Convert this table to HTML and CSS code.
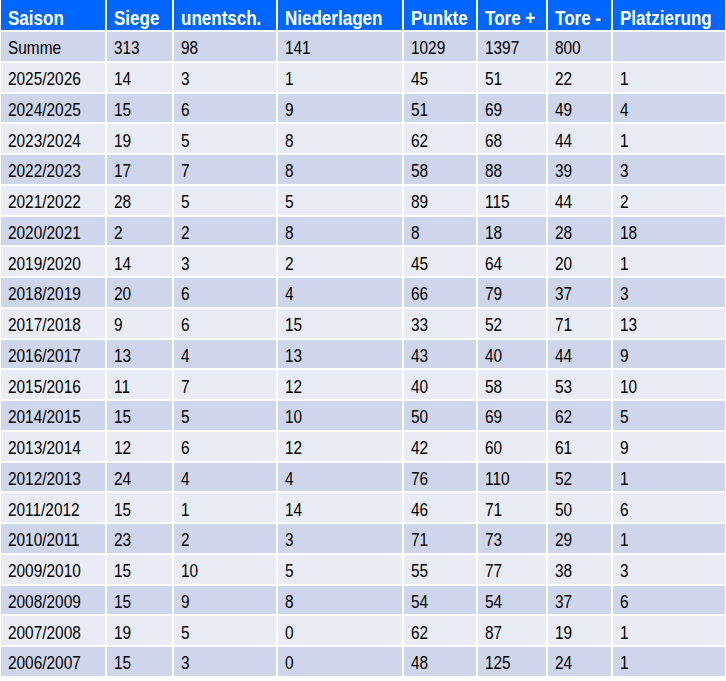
FILE: index.html
```html
<!DOCTYPE html>
<html lang="de">
<head>
<meta charset="utf-8">
<link rel="stylesheet" href="styles.css">
</head>
<body>
<div class="table">
  <div class="th"><span>Saison</span></div><div class="th"><span>Siege</span></div><div class="th"><span>unentsch.</span></div><div class="th"><span>Niederlagen</span></div><div class="th"><span>Punkte</span></div><div class="th"><span>Tore +</span></div><div class="th"><span>Tore -</span></div><div class="th"><span>Platzierung</span></div>
  <div class="td o"><span>Summe</span></div><div class="td o"><span>313</span></div><div class="td o"><span>98</span></div><div class="td o"><span>141</span></div><div class="td o"><span>1029</span></div><div class="td o"><span>1397</span></div><div class="td o"><span>800</span></div><div class="td o"><span></span></div>
  <div class="td e"><span>2025/2026</span></div><div class="td e"><span>14</span></div><div class="td e"><span>3</span></div><div class="td e"><span>1</span></div><div class="td e"><span>45</span></div><div class="td e"><span>51</span></div><div class="td e"><span>22</span></div><div class="td e"><span>1</span></div>
  <div class="td o"><span>2024/2025</span></div><div class="td o"><span>15</span></div><div class="td o"><span>6</span></div><div class="td o"><span>9</span></div><div class="td o"><span>51</span></div><div class="td o"><span>69</span></div><div class="td o"><span>49</span></div><div class="td o"><span>4</span></div>
  <div class="td e"><span>2023/2024</span></div><div class="td e"><span>19</span></div><div class="td e"><span>5</span></div><div class="td e"><span>8</span></div><div class="td e"><span>62</span></div><div class="td e"><span>68</span></div><div class="td e"><span>44</span></div><div class="td e"><span>1</span></div>
  <div class="td o"><span>2022/2023</span></div><div class="td o"><span>17</span></div><div class="td o"><span>7</span></div><div class="td o"><span>8</span></div><div class="td o"><span>58</span></div><div class="td o"><span>88</span></div><div class="td o"><span>39</span></div><div class="td o"><span>3</span></div>
  <div class="td e"><span>2021/2022</span></div><div class="td e"><span>28</span></div><div class="td e"><span>5</span></div><div class="td e"><span>5</span></div><div class="td e"><span>89</span></div><div class="td e"><span>115</span></div><div class="td e"><span>44</span></div><div class="td e"><span>2</span></div>
  <div class="td o"><span>2020/2021</span></div><div class="td o"><span>2</span></div><div class="td o"><span>2</span></div><div class="td o"><span>8</span></div><div class="td o"><span>8</span></div><div class="td o"><span>18</span></div><div class="td o"><span>28</span></div><div class="td o"><span>18</span></div>
  <div class="td e"><span>2019/2020</span></div><div class="td e"><span>14</span></div><div class="td e"><span>3</span></div><div class="td e"><span>2</span></div><div class="td e"><span>45</span></div><div class="td e"><span>64</span></div><div class="td e"><span>20</span></div><div class="td e"><span>1</span></div>
  <div class="td o"><span>2018/2019</span></div><div class="td o"><span>20</span></div><div class="td o"><span>6</span></div><div class="td o"><span>4</span></div><div class="td o"><span>66</span></div><div class="td o"><span>79</span></div><div class="td o"><span>37</span></div><div class="td o"><span>3</span></div>
  <div class="td e"><span>2017/2018</span></div><div class="td e"><span>9</span></div><div class="td e"><span>6</span></div><div class="td e"><span>15</span></div><div class="td e"><span>33</span></div><div class="td e"><span>52</span></div><div class="td e"><span>71</span></div><div class="td e"><span>13</span></div>
  <div class="td o"><span>2016/2017</span></div><div class="td o"><span>13</span></div><div class="td o"><span>4</span></div><div class="td o"><span>13</span></div><div class="td o"><span>43</span></div><div class="td o"><span>40</span></div><div class="td o"><span>44</span></div><div class="td o"><span>9</span></div>
  <div class="td e"><span>2015/2016</span></div><div class="td e"><span>11</span></div><div class="td e"><span>7</span></div><div class="td e"><span>12</span></div><div class="td e"><span>40</span></div><div class="td e"><span>58</span></div><div class="td e"><span>53</span></div><div class="td e"><span>10</span></div>
  <div class="td o"><span>2014/2015</span></div><div class="td o"><span>15</span></div><div class="td o"><span>5</span></div><div class="td o"><span>10</span></div><div class="td o"><span>50</span></div><div class="td o"><span>69</span></div><div class="td o"><span>62</span></div><div class="td o"><span>5</span></div>
  <div class="td e"><span>2013/2014</span></div><div class="td e"><span>12</span></div><div class="td e"><span>6</span></div><div class="td e"><span>12</span></div><div class="td e"><span>42</span></div><div class="td e"><span>60</span></div><div class="td e"><span>61</span></div><div class="td e"><span>9</span></div>
  <div class="td o"><span>2012/2013</span></div><div class="td o"><span>24</span></div><div class="td o"><span>4</span></div><div class="td o"><span>4</span></div><div class="td o"><span>76</span></div><div class="td o"><span>110</span></div><div class="td o"><span>52</span></div><div class="td o"><span>1</span></div>
  <div class="td e"><span>2011/2012</span></div><div class="td e"><span>15</span></div><div class="td e"><span>1</span></div><div class="td e"><span>14</span></div><div class="td e"><span>46</span></div><div class="td e"><span>71</span></div><div class="td e"><span>50</span></div><div class="td e"><span>6</span></div>
  <div class="td o"><span>2010/2011</span></div><div class="td o"><span>23</span></div><div class="td o"><span>2</span></div><div class="td o"><span>3</span></div><div class="td o"><span>71</span></div><div class="td o"><span>73</span></div><div class="td o"><span>29</span></div><div class="td o"><span>1</span></div>
  <div class="td e"><span>2009/2010</span></div><div class="td e"><span>15</span></div><div class="td e"><span>10</span></div><div class="td e"><span>5</span></div><div class="td e"><span>55</span></div><div class="td e"><span>77</span></div><div class="td e"><span>38</span></div><div class="td e"><span>3</span></div>
  <div class="td o"><span>2008/2009</span></div><div class="td o"><span>15</span></div><div class="td o"><span>9</span></div><div class="td o"><span>8</span></div><div class="td o"><span>54</span></div><div class="td o"><span>54</span></div><div class="td o"><span>37</span></div><div class="td o"><span>6</span></div>
  <div class="td e"><span>2007/2008</span></div><div class="td e"><span>19</span></div><div class="td e"><span>5</span></div><div class="td e"><span>0</span></div><div class="td e"><span>62</span></div><div class="td e"><span>87</span></div><div class="td e"><span>19</span></div><div class="td e"><span>1</span></div>
  <div class="td o"><span>2006/2007</span></div><div class="td o"><span>15</span></div><div class="td o"><span>3</span></div><div class="td o"><span>0</span></div><div class="td o"><span>48</span></div><div class="td o"><span>125</span></div><div class="td o"><span>24</span></div><div class="td o"><span>1</span></div>
</div>
</body>
</html>
```
FILE: styles.css
```css
html, body {
  margin: 0;
  padding: 0;
  background: #ffffff;
}
body {
  font-family: "Liberation Sans", Arial, sans-serif;
}
.table {
  display: grid;
  grid-template-columns: 104px 65px 102px 124px 72px 68px 63px 112px;
  grid-template-rows: 30px;
  grid-auto-rows: 28.76px;
  column-gap: 2px;
  row-gap: 2px;
  padding: 0 1px;
  width: 724px;
}
.th, .td {
  display: flex;
  align-items: center;
  padding-left: 7px;
  white-space: nowrap;
  overflow: hidden;
}
.th {
  background: #0066ff;
  color: #ffffff;
  font-weight: bold;
  font-size: 21px;
  padding-top: 4px;
}
.td {
  color: #000000;
  font-size: 19px;
  padding-top: 3px;
}
.th span, .td span {
  display: inline-block;
  transform: scaleX(0.81);
  transform-origin: 0 50%;
  line-height: 1;
}
.o { background: #cfd5ea; }
.e { background: #e9ebf5; }
```
